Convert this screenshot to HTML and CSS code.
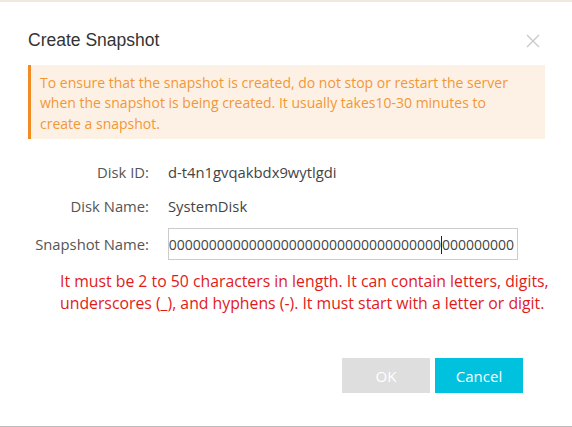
FILE: index.html
```html
<!DOCTYPE html>
<html lang="en">
<head>
<meta charset="utf-8">
<title>Create Snapshot</title>
<link rel="stylesheet" href="styles.css">
</head>
<body>
<div class="modal">
  <div class="header">
    <h1 class="title">Create Snapshot</h1>
    <span class="close" aria-label="Close">
      <svg width="14" height="14" viewBox="0 0 14 14"><path d="M1 1L13 13M13 1L1 13" stroke="#c9c9c9" stroke-width="1.4" fill="none"/></svg>
    </span>
  </div>
  <div class="alert">To ensure that the snapshot is created, do not stop or restart the server when the snapshot is being created. It usually takes10-30 minutes to create a snapshot.</div>
  <div class="form">
    <div class="row">
      <div class="label">Disk ID:</div>
      <div class="value">d-t4n1gvqakbdx9wytlgdi</div>
    </div>
    <div class="row">
      <div class="label">Disk Name:</div>
      <div class="value">SystemDisk</div>
    </div>
    <div class="row row-input">
      <div class="label">Snapshot Name:</div>
      <div class="input"><span class="input-text">00000000000000000000000000000000000000000<span class="caret"></span>000000000</span></div>
    </div>
  </div>
  <div class="error">It must be 2 to 50 characters in length. It can contain letters, digits, underscores (_), and hyphens (-). It must start with a letter or digit.</div>
  <div class="footer">
    <button class="btn btn-ok" type="button">OK</button>
    <button class="btn btn-cancel" type="button">Cancel</button>
  </div>
</div>
</body>
</html>
```

FILE: styles.css
```css
html, body {
  margin: 0;
  padding: 0;
  background: #ffffff;
}

.modal {
  width: 572px;
  height: 427px;
  box-sizing: border-box;
  border-top: 2px solid #f1e8df;
  border-bottom: 1px solid #bdbdbd;
  display: flex;
  flex-direction: column;
  font-family: "Open Sans", "Noto Sans", sans-serif;
  font-size: 14px;
  color: #333333;
}

.header {
  display: flex;
  justify-content: space-between;
  align-items: center;
  padding: 28px 32px 0 28px;
  height: 20px;
}

.title {
  margin: 0;
  font-family: "Liberation Sans", Arial, sans-serif;
  font-weight: normal;
  font-size: 17.5px;
  line-height: 20px;
  color: #333333;
}

.close {
  display: flex;
  width: 14px;
  height: 14px;
  margin-top: 2px;
}

.alert {
  margin: 15px 27px 0 28px;
  padding: 8px 16px 5px 9px;
  border-left: 3px solid #f28b23;
  background: #fdf1e5;
  color: #f29737;
  line-height: 20.4px;
}

.form {
  margin-top: 16px;
  display: flex;
  flex-direction: column;
  font-size: 14.8px;
}

.row {
  display: flex;
  align-items: center;
  height: 34px;
}

.row-input {
  margin-top: 5px;
  height: 32px;
}

.label {
  width: 149px;
  text-align: right;
  flex: none;
  color: #555555;
}

.value {
  margin-left: 19px;
  color: #444444;
}

.input {
  margin-left: 19px;
  width: 350px;
  height: 32px;
  box-sizing: border-box;
  border: 1px solid #cccccc;
  overflow: hidden;
  display: flex;
  justify-content: flex-end;
  align-items: center;
  padding-right: 3px;
  color: #444444;
  font-size: 14px;
}

.input-text {
  white-space: nowrap;
  flex: none;
}

.caret {
  display: inline-block;
  width: 0;
  height: 18px;
  border-left: 1px solid #222222;
  vertical-align: -4px;
}

.error {
  margin: 11px 20px 0 60px;
  color: #e21a1a;
  font-size: 15.8px;
  line-height: 21.5px;
}

.footer {
  display: flex;
  justify-content: flex-end;
  gap: 5px;
  margin-top: 44px;
  padding-right: 49px;
}

.btn {
  width: 88px;
  height: 35px;
  border: none;
  color: #ffffff;
  font-family: "Open Sans", "Noto Sans", sans-serif;
  font-size: 15px;
  padding: 0;
}

.btn-ok {
  background: #dedede;
}

.btn-cancel {
  background: #00c1de;
}
```
